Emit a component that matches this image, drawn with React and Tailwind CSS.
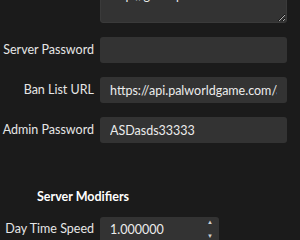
import { useState } from 'react'

function Row({ label, children, top }) {
  return (
    <div className={`flex gap-[6px] ${top ? 'items-start' : 'items-center'}`}>
      <label className="w-[94px] shrink-0 text-right text-[12.5px] whitespace-nowrap text-[#e6e6e6]">
        {label}
      </label>
      {children}
    </div>
  )
}

const field =
  'h-[26px] rounded-[3px] bg-[#333333] px-[10px] text-[12.5px] text-[#ececec] outline-none'

export default function App() {
  const [url, setUrl] = useState('https://api.palworldgame.com/api/banlist.txt')
  const [admin, setAdmin] = useState('ASDasds33333')
  const [pass, setPass] = useState('')
  const [speed, setSpeed] = useState('1.000000')

  return (
    <div
      className="h-[240px] w-[300px] overflow-hidden bg-[#1b1b1b]"
      style={{ fontFamily: 'Lato, "Liberation Sans", sans-serif' }}
    >
      <div className="-mt-[20px] flex flex-col gap-[14px]">
        <Row label="Public IP" top>
          <textarea
            className="h-[43px] w-[187px] resize-y rounded-[3px] border border-[#3a3a3a] bg-[#333333] px-[9px] pt-[7px] text-[12.5px] leading-[16px] text-[#ececec] outline-none"
            defaultValue="http://game.pal"
          />
        </Row>
        <Row label="Server Password">
          <input className={`${field} w-[187px]`} value={pass} onChange={(e) => setPass(e.target.value)} />
        </Row>
        <Row label="Ban List URL">
          <input className={`${field} w-[187px]`} value={url} onChange={(e) => setUrl(e.target.value)} />
        </Row>
        <Row label="Admin Password">
          <input className={`${field} w-[187px]`} value={admin} onChange={(e) => setAdmin(e.target.value)} />
        </Row>

        <h3 className="mt-[31px] -mb-[4px] h-[18px] pl-[37px] text-[12.5px] leading-[18px] font-bold text-white">
          Server Modifiers
        </h3>

        <Row label="Day Time Speed">
          <div className="relative">
            <input
              className={`${field} w-[119px]`}
              value={speed}
              onChange={(e) => setSpeed(e.target.value)}
            />
            <div className="absolute right-[6px] top-[3px] flex h-[20px] flex-col justify-between text-[6px] leading-none text-[#cfcfcf]">
              <span>▲</span>
              <span>▼</span>
            </div>
          </div>
        </Row>
      </div>
    </div>
  )
}
